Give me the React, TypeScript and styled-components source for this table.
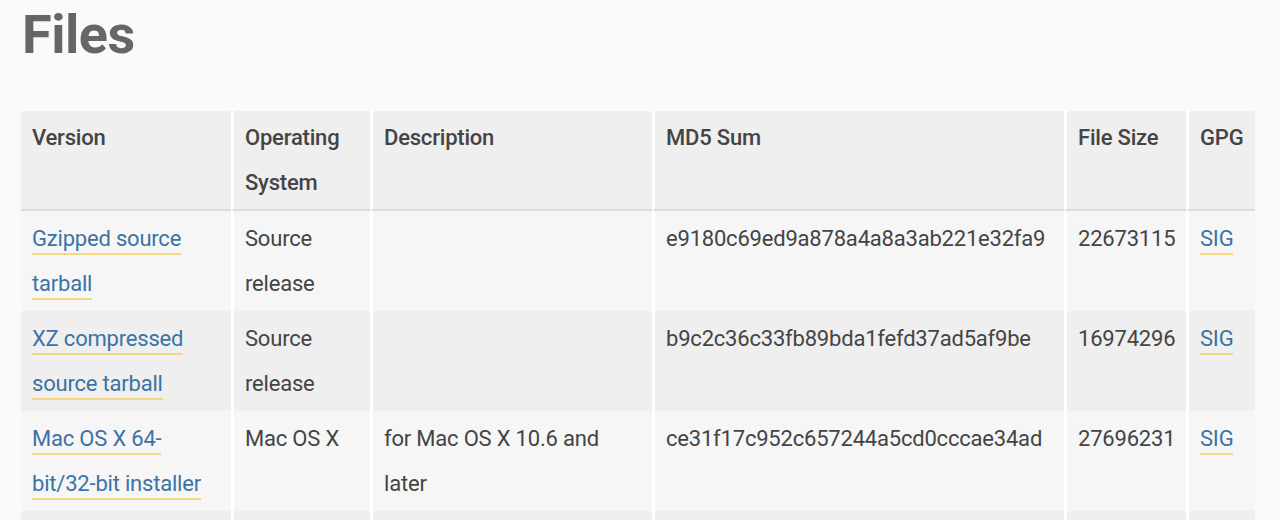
import React from "react";
import styled, { createGlobalStyle } from "styled-components";

const GlobalStyle = createGlobalStyle`
  html, body {
    margin: 0;
    padding: 0;
    background: #fafafa;
  }
  body {
    font-family: Roboto, "Noto Sans", sans-serif;
    color: #444;
  }
`;

const Page = styled.main`
  padding: 8px 0 0 21px;
`;

const Title = styled.h2`
  margin: 0 0 49px 1px;
  font-family: Roboto, "Noto Sans", sans-serif;
  font-weight: 700;
  font-size: 54px;
  line-height: 1;
  color: #666;
  letter-spacing: -0.5px;
`;

const Table = styled.table`
  width: 1234px;
  table-layout: fixed;
  border-collapse: separate;
  border-spacing: 0;
  font-size: 22px;
  line-height: 45px;
  letter-spacing: -0.2px;
`;

const Head = styled.th<{ $w: number }>`
  box-sizing: border-box;
  width: ${(p) => p.$w}px;
  text-align: left;
  vertical-align: top;
  font-weight: 500;
  color: #444;
  background: #efefef;
  padding: 4px 10px 4px 11px;
  border-bottom: 2px solid #dcdcdc;
  border-left: 3px solid #fff;
  &:first-child {
    border-left: none;
  }
`;

const Row = styled.tr<{ $alt: boolean }>`
  background: ${(p) => (p.$alt ? "#efefef" : "#f6f6f6")};
`;

const Cell = styled.td`
  vertical-align: top;
  height: 90px;
  padding: 5px 10px 5px 11px;
  border-left: 3px solid #fff;
  color: #444;
  &:first-child {
    border-left: none;
  }
`;

const Link = styled.a`
  color: #3b73a5;
  text-decoration: none;
  border-bottom: 2px solid #f4d685;
  padding-bottom: 2px;
`;

const columns = [
  { label: "Version", w: 210 },
  { label: "Operating System", w: 139 },
  { label: "Description", w: 282 },
  { label: "MD5 Sum", w: 412 },
  { label: "File Size", w: 122 },
  { label: "GPG", w: 69 },
];

type FileRow = {
  version: string;
  os: string;
  desc: string;
  md5: string;
  size: string;
  sig: boolean;
};

const files: FileRow[] = [
  {
    version: "Gzipped source tarball",
    os: "Source release",
    desc: "",
    md5: "e9180c69ed9a878a4a8a3ab221e32fa9",
    size: "22673115",
    sig: true,
  },
  {
    version: "XZ compressed source tarball",
    os: "Source release",
    desc: "",
    md5: "b9c2c36c33fb89bda1fefd37ad5af9be",
    size: "16974296",
    sig: true,
  },
  {
    version: "Mac OS X 64-bit/32-bit installer",
    os: "Mac OS X",
    desc: "for Mac OS X 10.6 and later",
    md5: "ce31f17c952c657244a5cd0cccae34ad",
    size: "27696231",
    sig: true,
  },
  { version: "", os: "", desc: "", md5: "", size: "", sig: false },
];

export default function App() {
  return (
    <>
      <GlobalStyle />
      <Page>
        <Title>Files</Title>
        <Table>
          <thead>
            <tr>
              {columns.map((c) => (
                <Head key={c.label} $w={c.w}>
                  {c.label}
                </Head>
              ))}
            </tr>
          </thead>
          <tbody>
            {files.map((f, i) => (
              <Row key={i} $alt={i % 2 === 1}>
                <Cell>{f.version && <Link href="#">{f.version}</Link>}</Cell>
                <Cell>{f.os}</Cell>
                <Cell>{f.desc}</Cell>
                <Cell>{f.md5}</Cell>
                <Cell>{f.size}</Cell>
                <Cell>{f.sig && <Link href="#">SIG</Link>}</Cell>
              </Row>
            ))}
          </tbody>
        </Table>
      </Page>
    </>
  );
}
